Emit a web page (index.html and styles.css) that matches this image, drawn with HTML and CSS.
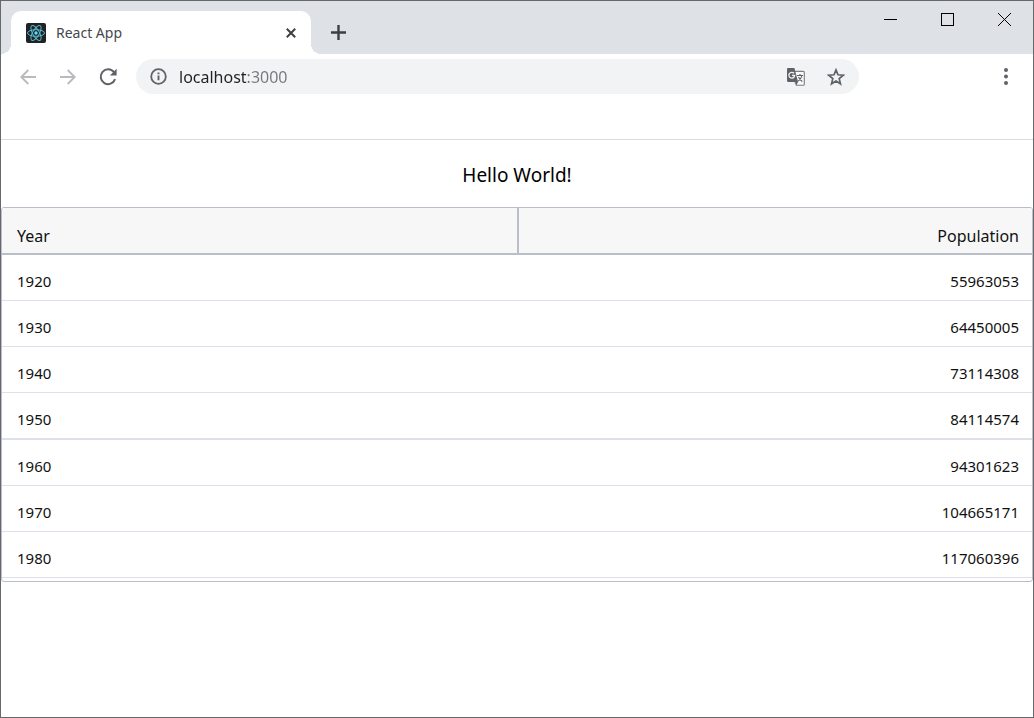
FILE: index.html
```html
<!DOCTYPE html>
<html lang="en">
<head>
    <meta charset="UTF-8">
    <meta name="viewport" content="width=device-width, initial-scale=1.0">
    <title>React App</title>
    <link rel="stylesheet" href="styles.css">
</head>
<body>
    <header class="browser">
        <div class="tab-strip">
            <div class="tab">
                <svg class="favicon" width="20" height="20" viewBox="0 0 20 20">
                    <rect width="20" height="20" rx="2" fill="#222"/>
                    <g fill="none" stroke="#53b9d6" stroke-width="1">
                        <ellipse cx="10" cy="10" rx="8.5" ry="3.3"/>
                        <ellipse cx="10" cy="10" rx="8.5" ry="3.3" transform="rotate(60 10 10)"/>
                        <ellipse cx="10" cy="10" rx="8.5" ry="3.3" transform="rotate(120 10 10)"/>
                    </g>
                    <circle cx="10" cy="10" r="1.7" fill="#61dafb"/>
                </svg>
                <span class="tab-title">React App</span>
                <button class="tab-close" aria-label="Close tab">
                    <svg width="10" height="10" viewBox="0 0 10 10"><path d="M.8.8l8.4 8.4M9.2.8L.8 9.2" stroke="#3c4043" stroke-width="2"/></svg>
                </button>
            </div>
            <button class="new-tab" aria-label="New tab">
                <svg width="15" height="15" viewBox="0 0 15 15"><path d="M7.5 0v15M0 7.5h15" stroke="#3c4043" stroke-width="2.4"/></svg>
            </button>
            <div class="window-buttons">
                <button aria-label="Minimize">
                    <svg width="13" height="13" viewBox="0 0 13 13"><path d="M0 6.5h13" stroke="#000"/></svg>
                </button>
                <button aria-label="Maximize">
                    <svg width="13" height="13" viewBox="0 0 13 13"><rect x=".5" y=".5" width="12" height="12" fill="none" stroke="#000"/></svg>
                </button>
                <button aria-label="Close">
                    <svg width="13" height="13" viewBox="0 0 13 13"><path d="M0 0l13 13M13 0L0 13" stroke="#000"/></svg>
                </button>
            </div>
        </div>
        <div class="toolbar">
            <button class="tool" aria-label="Back">
                <svg width="16" height="16" viewBox="0 0 16 16"><path d="M16 8H1.5M8.3 1L1.3 8l7 7" fill="none" stroke="#b9bbbe" stroke-width="1.9"/></svg>
            </button>
            <button class="tool" aria-label="Forward">
                <svg width="16" height="16" viewBox="0 0 16 16"><path d="M0 8h14.5M7.7 1l7 7-7 7" fill="none" stroke="#b9bbbe" stroke-width="1.9"/></svg>
            </button>
            <button class="tool" aria-label="Reload">
                <svg width="18" height="18" viewBox="0 0 18 18">
                    <path d="M15 4.2A7.4 7.4 0 1 0 16.1 11.2" fill="none" stroke="#5f6368" stroke-width="2"/>
                    <path d="M17.6.8v6.7h-6.7z" fill="#5f6368"/>
                </svg>
            </button>
            <div class="omnibox">
                <svg width="17" height="17" viewBox="0 0 17 17">
                    <circle cx="8.5" cy="8.5" r="7.3" fill="none" stroke="#5f6368" stroke-width="1.8"/>
                    <path d="M8.5 7.6v4.7M8.5 4.4v1.9" stroke="#5f6368" stroke-width="1.9"/>
                </svg>
                <input class="address" type="text" value="localhost:3000" aria-label="Address">
                <button class="omni-button" aria-label="Translate this page">
                    <svg width="18" height="18" viewBox="0 0 18 18">
                        <path d="M8 3.4h8.2c.7 0 1.1.4 1.1 1.1v11.7c0 .7-.4 1.1-1.1 1.1H9.4L8 14" fill="#f8f9fa" stroke="#7b7e82" stroke-width="1.1"/>
                        <path d="M1.2 0h6.2l3.7 14H1.2C.5 14 0 13.5 0 12.8V1.2C0 .5.5 0 1.2 0z" fill="#5f6368"/>
                        <path d="M8.7 14h2.4l-2 3.3z" fill="#5f6368"/>
                        <path d="M7 5.3A2.9 2.9 0 1 0 7.7 7.4H5" fill="none" stroke="#f1f3f4" stroke-width="1.3"/>
                        <path d="M10 7.5h6M13 6v1.5M15 7.5c-.5 2.5-2 4.3-4 5.5M11.5 9c.8 1.8 2 3.2 3.8 4.5" fill="none" stroke="#5f6368" stroke-width="1.1"/>
                    </svg>
                </button>
                <button class="omni-button" aria-label="Bookmark this page">
                    <svg width="18" height="18" viewBox="0 0 18 18"><path d="M9 1.9l2 4.9 5.3.4-4.1 3.4 1.3 5.2L9 13l-4.5 2.8 1.3-5.2-4.1-3.4L7 6.8z" fill="none" stroke="#5f6368" stroke-width="1.7"/></svg>
                </button>
            </div>
            <button class="tool" aria-label="Menu">
                <svg width="4" height="17" viewBox="0 0 4 17"><g fill="#5f6368"><circle cx="2" cy="2" r="2"/><circle cx="2" cy="8.5" r="2"/><circle cx="2" cy="15" r="2"/></g></svg>
            </button>
        </div>
    </header>

    <main>
        <p class="greeting">Hello World!</p>
        <div class="grid">
            <table>
                <thead>
                    <tr><th>Year</th><th>Population</th></tr>
                </thead>
                <tbody>
                    <tr><td>1920</td><td>55963053</td></tr>
                    <tr><td>1930</td><td>64450005</td></tr>
                    <tr><td>1940</td><td>73114308</td></tr>
                    <tr class="thick"><td>1950</td><td>84114574</td></tr>
                    <tr><td>1960</td><td>94301623</td></tr>
                    <tr><td>1970</td><td>104665171</td></tr>
                    <tr><td>1980</td><td>117060396</td></tr>
                </tbody>
            </table>
        </div>
    </main>
</body>
</html>
```
FILE: styles.css
```css
* {
    box-sizing: border-box;
}

body {
    margin: 0;
    min-height: 100vh;
    border: 1px solid #67686b;
    background: #fff;
    color: #111;
    font-family: "Segoe UI", "Noto Sans", sans-serif;
    font-size: 15px;
}

button {
    display: flex;
    align-items: center;
    justify-content: center;
    padding: 0;
    border: none;
    background: transparent;
    cursor: pointer;
}

/* Browser chrome */
.browser {
    height: 139px;
    border-bottom: 1px solid #dadce0;
}

.tab-strip {
    display: flex;
    align-items: flex-end;
    height: 53px;
    padding-left: 10px;
    background: #dee1e6;
}

.tab {
    position: relative;
    display: flex;
    align-items: center;
    width: 300px;
    height: 43px;
    padding: 0 10px 0 15px;
    border-radius: 10px 10px 0 0;
    background: #fff;
}

/* flared feet of the active tab */
.tab::before,
.tab::after {
    content: "";
    position: absolute;
    bottom: 0;
    width: 10px;
    height: 10px;
}

.tab::before {
    right: 100%;
    background: radial-gradient(circle at 0 0, #dee1e6 10px, #fff 10px);
}

.tab::after {
    left: 100%;
    background: radial-gradient(circle at 100% 0, #dee1e6 10px, #fff 10px);
}

.tab-title {
    flex: 1;
    margin-left: 10px;
    color: #45494d;
    font-size: 14px;
}

.tab-close {
    width: 20px;
    height: 20px;
}

.new-tab {
    width: 35px;
    height: 43px;
    margin-left: 10px;
}

.window-buttons {
    display: flex;
    align-self: flex-start;
    margin-left: auto;
}

.window-buttons button {
    width: 57px;
    height: 37px;
}

.toolbar {
    display: flex;
    align-items: center;
    padding: 5px 7px;
}

.tool {
    width: 40px;
    height: 35px;
}

.omnibox {
    display: flex;
    flex: 1;
    align-items: center;
    height: 35px;
    margin: 0 127px 0 8px;
    padding: 0 3px 0 14px;
    border-radius: 18px;
    background: #f1f3f4;
}

.address {
    flex: 1;
    min-width: 0;
    margin-left: 12px;
    padding: 0;
    border: none;
    outline: none;
    /* host is dark, port is grey */
    background: linear-gradient(to right, #202124 68px, #75797d 68px);
    -webkit-background-clip: text;
    background-clip: text;
    color: transparent;
    font-family: inherit;
    font-size: 16px;
}

.omni-button {
    width: 40px;
    height: 35px;
}

/* Page */
.greeting {
    margin: 0;
    padding: 23px 0 20px;
    color: #000;
    font-size: 19px;
    line-height: 24px;
    text-align: center;
}

.grid {
    padding-bottom: 3px;
    border: 1px solid #babec9;
    border-radius: 3px;
    overflow: hidden;
}

table {
    width: 100%;
    border-collapse: separate;
    border-spacing: 0;
    table-layout: fixed;
}

th,
td {
    padding: 15px 13px 8px 15px;
    line-height: 22px;
    text-align: left;
}

th {
    padding-top: 17px;
    padding-bottom: 6px;
    border-bottom: 2px solid #babec9;
    background: #f7f7f7;
    font-size: 16px;
    font-weight: normal;
}

td {
    border-bottom: 1px solid #dde0eb;
}

.thick td {
    border-bottom-width: 2px;
}

th:last-child,
td:last-child {
    text-align: right;
}

th:last-child {
    border-left: 2px solid #babec9;
}
```
